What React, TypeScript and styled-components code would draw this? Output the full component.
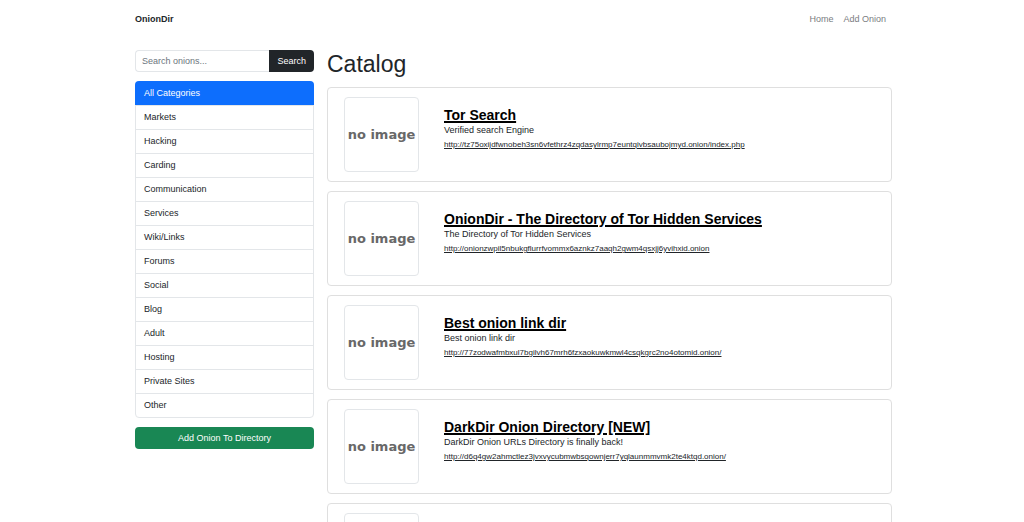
import React from "react";
import styled, { createGlobalStyle } from "styled-components";

const GlobalStyle = createGlobalStyle`
  *, *::before, *::after { box-sizing: border-box; }
  html { scrollbar-width: none; }
  body {
    margin: 0;
    background: #fff;
    color: #212529;
    font-family: "Liberation Sans", Arial, sans-serif;
    font-size: 9px;
    line-height: 14px;
  }
`;

const Page = styled.div`
  padding: 0 11px 0 14px;
`;

const Container = styled.div`
  max-width: 757px;
  margin: 0 auto;
`;

const Navbar = styled.header`
  display: flex;
  align-items: center;
  justify-content: space-between;
  height: 38px;
`;

const Brand = styled.a`
  color: #212529;
  font-weight: 700;
  text-decoration: none;
`;

const NavLinks = styled.nav`
  display: flex;
  gap: 10px;
  padding-right: 6px;
`;

const NavLink = styled.a`
  color: #7a7d7f;
  text-decoration: none;
`;

const Layout = styled.div`
  display: grid;
  grid-template-columns: 179px minmax(0, 1fr);
  column-gap: 13px;
  align-items: start;
  padding-top: 12px;
`;

const Sidebar = styled.aside`
  display: flex;
  flex-direction: column;
  gap: 9px;
`;

const SearchForm = styled.form`
  display: flex;
  height: 22px;
`;

const SearchInput = styled.input`
  flex: 1;
  min-width: 0;
  padding: 0 6px;
  border: 1px solid #e3e6e9;
  border-right: 0;
  border-radius: 4px 0 0 4px;
  color: #212529;
  font: inherit;

  &::placeholder {
    color: #6c757d;
    opacity: 1;
  }
`;

const SearchButton = styled.button`
  padding: 0 8px;
  border: 0;
  border-radius: 0 4px 4px 0;
  background: #212529;
  color: #fff;
  font: inherit;
`;

const CategoryList = styled.ul`
  margin: 0;
  padding: 0;
  list-style: none;
  border: 1px solid #e3e6e9;
  border-radius: 4px;
`;

const CategoryItem = styled.li`
  & + & {
    border-top: 1px solid #e3e6e9;
  }
`;

const CategoryLink = styled.a<{ $active?: boolean }>`
  display: block;
  margin: ${(p) => (p.$active ? "-1px -1px 0" : "0")};
  padding: ${(p) => (p.$active ? "5px 9px" : "4px 8px 5px")};
  border-radius: ${(p) => (p.$active ? "4px 4px 0 0" : "0")};
  background: ${(p) => (p.$active ? "#0d6efd" : "transparent")};
  color: ${(p) => (p.$active ? "#fff" : "#212529")};
  text-decoration: none;
`;

const AddButton = styled.button`
  height: 22px;
  border: 0;
  border-radius: 4px;
  background: #198754;
  color: #fff;
  font: inherit;
`;

const Heading = styled.h1`
  margin: 0 0 9px;
  font-size: 23px;
  font-weight: 400;
  line-height: 28px;
`;

const Cards = styled.div`
  display: flex;
  flex-direction: column;
  gap: 9px;
`;

const Card = styled.article`
  display: flex;
  align-items: flex-start;
  gap: 25px;
  padding: 9px 16px;
  border: 1px solid #dfdfdf;
  border-radius: 4px;
`;

const Thumb = styled.div`
  display: flex;
  flex: none;
  align-items: center;
  justify-content: center;
  width: 75px;
  height: 75px;
  border: 1px solid #e3e6e9;
  border-radius: 4px;
  color: #686868;
  font-family: "DejaVu Sans", sans-serif;
  font-size: 13px;
  font-weight: 700;
  white-space: nowrap;
`;

const CardBody = styled.div`
  min-width: 0;
  padding-top: 10px;
`;

const Title = styled.h2`
  margin: 0;
  font-size: 14px;
  font-weight: 700;
  line-height: 16px;
`;

const TitleLink = styled.a`
  color: #000;
  text-decoration-thickness: 2px;
`;

const Description = styled.p`
  margin: 0;
`;

const Url = styled.a`
  display: block;
  color: #212529;
  font-size: 8px;
  line-height: 16px;
  overflow-wrap: anywhere;
`;

const categories = [
  "All Categories", "Markets", "Hacking", "Carding", "Communication", "Services", "Wiki/Links",
  "Forums", "Social", "Blog", "Adult", "Hosting", "Private Sites", "Other",
];

const entries = [
  {
    title: "Tor Search",
    description: "Verified search Engine",
    url: "http://tz75oxijdfwnobeh3sn6vfethrz4zqdasylrmp7euntqivbsaubojmyd.onion/index.php",
  },
  {
    title: "OnionDir - The Directory of Tor Hidden Services",
    description: "The Directory of Tor Hidden Services",
    url: "http://onionzwpil5nbukgflurrfvommx6aznkz7aaqh2gwm4qsxjj6yvihxid.onion",
  },
  {
    title: "Best onion link dir",
    description: "Best onion link dir",
    url: "http://77zodwafmbxul7bgilvh67mrh6fzxaokuwkmwl4csqkgrc2no4otomid.onion/",
  },
  {
    title: "DarkDir Onion Directory [NEW]",
    description: "DarkDir Onion URLs Directory is finally back!",
    url: "http://d6q4gw2ahmctlez3jvxvycubmwbsqownjerr7yqlaunmmvmk2te4ktqd.onion/",
  },
];

export default function App() {
  return (
    <Page>
      <GlobalStyle />
      <Container>
        <Navbar>
          <Brand href="#">OnionDir</Brand>
          <NavLinks>
            <NavLink href="#">Home</NavLink>
            <NavLink href="#add">Add Onion</NavLink>
          </NavLinks>
        </Navbar>
        <Layout>
          <Sidebar>
            <SearchForm onSubmit={(e) => e.preventDefault()}>
              <SearchInput type="text" aria-label="Search onions" placeholder="Search onions..." />
              <SearchButton type="submit">Search</SearchButton>
            </SearchForm>
            <CategoryList>
              {categories.map((name, i) => (
                <CategoryItem key={name}>
                  <CategoryLink href="#" $active={i === 0}>{name}</CategoryLink>
                </CategoryItem>
              ))}
            </CategoryList>
            <AddButton type="button">Add Onion To Directory</AddButton>
          </Sidebar>
          <main>
            <Heading>Catalog</Heading>
            <Cards>
              {entries.map((entry) => (
                <Card key={entry.url}>
                  <Thumb>no image</Thumb>
                  <CardBody>
                    <Title><TitleLink href={entry.url}>{entry.title}</TitleLink></Title>
                    <Description>{entry.description}</Description>
                    <Url href={entry.url}>{entry.url}</Url>
                  </CardBody>
                </Card>
              ))}
              <Card>
                <Thumb />
              </Card>
            </Cards>
          </main>
        </Layout>
      </Container>
    </Page>
  );
}
